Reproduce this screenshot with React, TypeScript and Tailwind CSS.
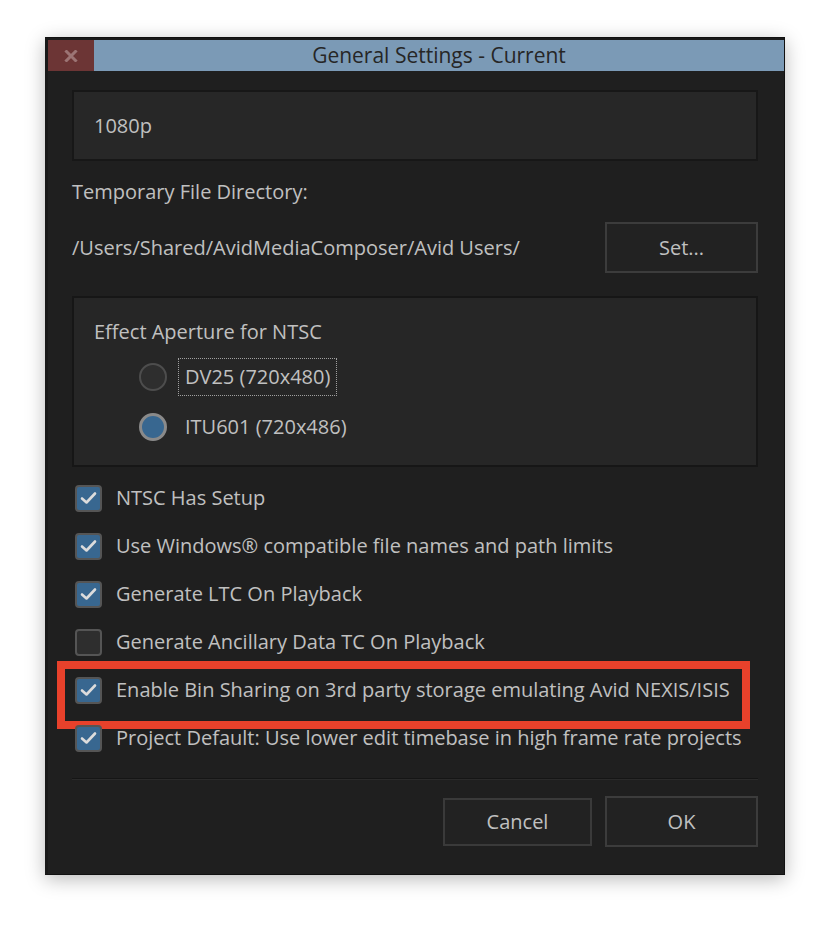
import React, { useState } from 'react';

const font = { fontFamily: '"Open Sans", "Noto Sans", sans-serif' };

const Check: React.FC<{ on: boolean }> = ({ on }) => (
  <span className="flex h-[27px] w-[27px] shrink-0 items-center justify-center rounded-[4px] border-2 border-[#555555] bg-[#386790] data-[off=true]:bg-[#2e2e2e]" data-off={!on}>
    {on && (
      <svg width="17" height="14" viewBox="0 0 17 14">
        <path d="M2 7.5 L6.5 11.5 L15 2.5" fill="none" stroke="#dcdcdc" strokeWidth="2.6" strokeLinecap="round" strokeLinejoin="round" />
      </svg>
    )}
  </span>
);

const Radio: React.FC<{ on: boolean }> = ({ on }) =>
  on ? (
    <span className="h-[28px] w-[28px] rounded-full border-[3px] border-[#8a8a8a] bg-[#386790]" />
  ) : (
    <span className="h-[28px] w-[28px] rounded-full border-2 border-[#4d4d4d] bg-[#2e2e2e]" />
  );

const options = [
  { label: 'NTSC Has Setup', on: true },
  { label: 'Use Windows® compatible file names and path limits', on: true },
  { label: 'Generate LTC On Playback', on: true },
  { label: 'Generate Ancillary Data TC On Playback', on: false },
  { label: 'Enable Bin Sharing on 3rd party storage emulating Avid NEXIS/ISIS', on: true, mark: true },
  { label: 'Project Default: Use lower edit timebase in high frame rate projects', on: true },
];

export default function App() {
  const [aperture] = useState('itu');

  return (
    <div className="h-[928px] w-[830px] overflow-hidden bg-white pt-[37px] pl-[45px]" style={font}>
      <div className="flex h-[838px] w-[740px] flex-col border border-[#111111] border-l-[3px] border-l-[#191919] bg-[#1f1f1f] shadow-[0_4px_18px_rgba(0,0,0,0.28)]">
        {/* title bar */}
        <div className="flex h-[33px] shrink-0 border-t-2 border-[#1a1a1a]">
          <div className="flex w-[46px] items-center justify-center bg-[#6c3535]">
            <svg width="14" height="12" viewBox="0 0 14 12">
              <path d="M2.5 1.5 L11.5 10.5 M11.5 1.5 L2.5 10.5" stroke="#9c7474" strokeWidth="3" strokeLinecap="square" />
            </svg>
          </div>
          <div className="flex flex-1 items-center justify-center bg-[#7b9ab6] text-[21px] leading-none text-[#262626]">
            General Settings - Current
          </div>
        </div>

        <div className="flex flex-col pr-[26px] pl-[24px] text-[20px] text-[#c0c0c0]">
          <div className="mt-[19px] flex h-[71px] items-center border-2 border-[#171717] bg-[#272727] pl-[20px]">
            1080p
          </div>

          <div className="mt-[19px] leading-[24px]">Temporary File Directory:</div>

          <div className="mt-[18px] flex h-[51px] items-center justify-between">
            <span>/Users/Shared/AvidMediaComposer/Avid Users/</span>
            <button className="flex h-[51px] w-[153px] items-center justify-center border-2 border-[#3c3c3c] bg-[#222222] text-[#c0c0c0]">
              Set...
            </button>
          </div>

          <div className="mt-[23px] flex h-[171px] flex-col border-2 border-[#161616] bg-[#262626] pl-[20px]">
            <div className="mt-[22px] leading-[24px]">Effect Aperture for NTSC</div>
            <div className="mt-[19px] ml-[45px] flex flex-col gap-[22px]">
              <div className="flex h-[28px] items-center">
                <Radio on={aperture === 'dv25'} />
                <span className="ml-[11px] border border-dotted border-[#a0a0a0] px-[6px] leading-[36px]">DV25 (720x480)</span>
              </div>
              <div className="flex h-[28px] items-center">
                <Radio on={aperture === 'itu'} />
                <span className="ml-[18px]">ITU601 (720x486)</span>
              </div>
            </div>
          </div>

          <div className="mt-[7px] flex flex-col">
            {options.map((o) => (
              <div key={o.label} className="relative flex h-[48px] items-center pl-[3px]">
                <Check on={o.on} />
                <span className="ml-[14px] whitespace-nowrap">{o.label}</span>
                {o.mark && (
                  <div className="pointer-events-none absolute top-[-5px] left-[-15px] h-[68px] w-[693px] border-[8px] border-[#e8412b]" />
                )}
              </div>
            ))}
          </div>

          <div className="mt-[16px] h-[2px] border-t border-[#151515] bg-[#2a2a2a]" />

          <div className="mt-[16px] flex items-center justify-end gap-[13px]">
            <button className="flex h-[48px] w-[149px] items-center justify-center border-2 border-[#3a3a3a] bg-[#222222] text-[#c0c0c0]">
              Cancel
            </button>
            <button className="flex h-[51px] w-[153px] items-center justify-center border-2 border-[#3c3c3c] bg-[#222222] text-[#c0c0c0]">
              OK
            </button>
          </div>
        </div>
      </div>
    </div>
  );
}
